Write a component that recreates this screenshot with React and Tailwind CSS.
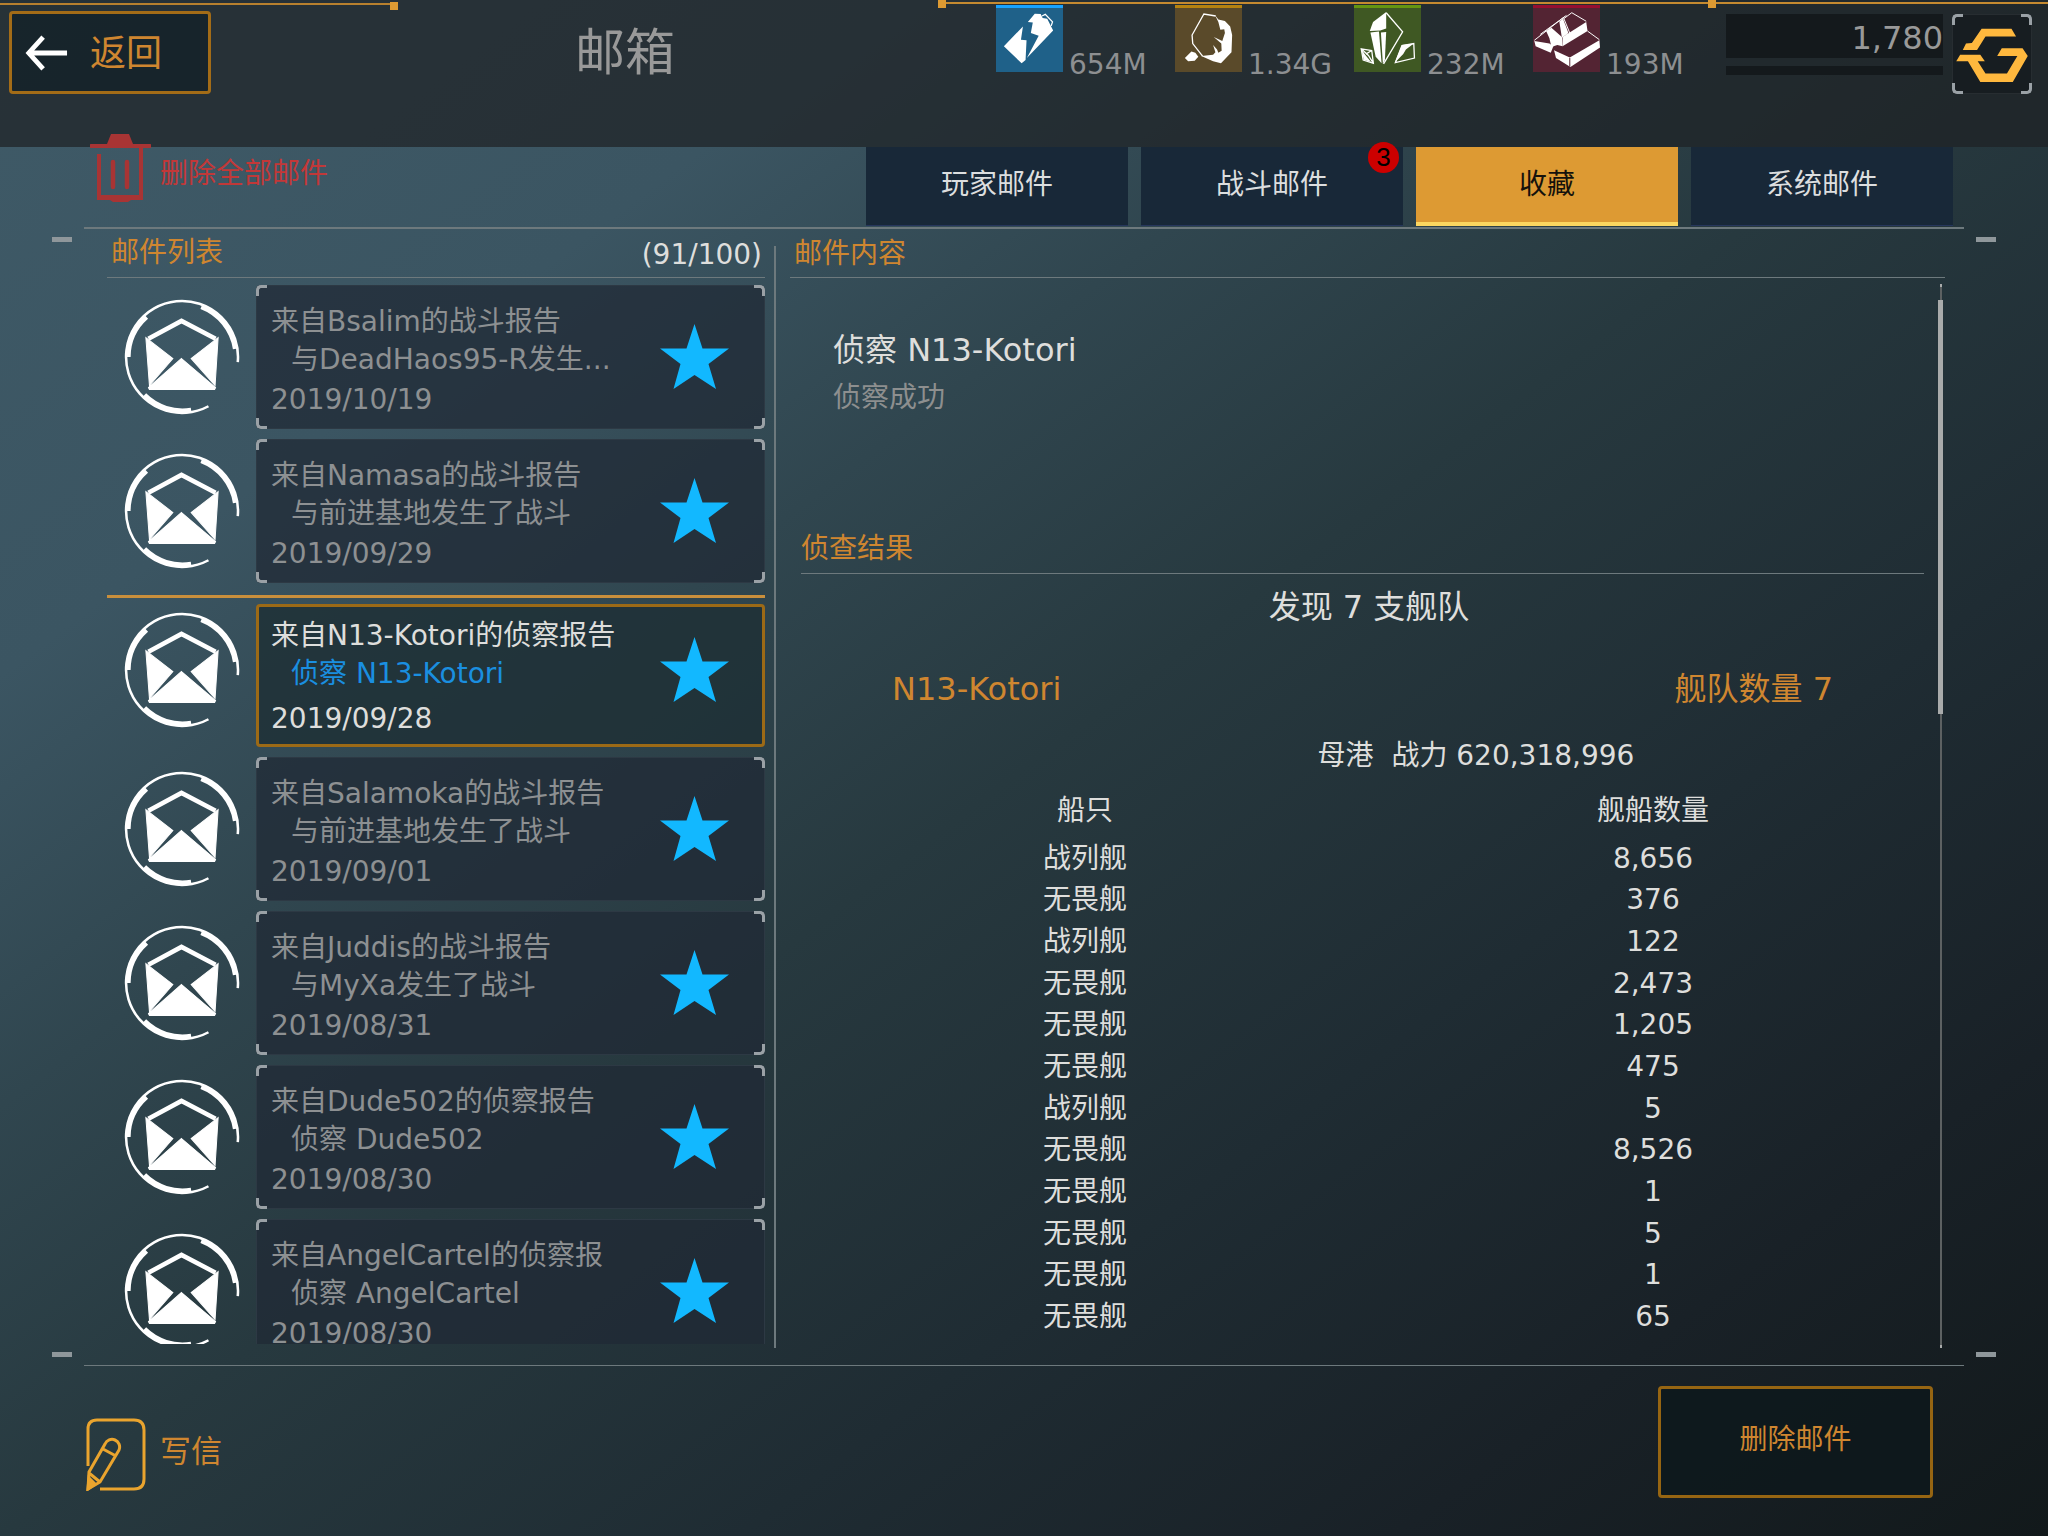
import { useState } from 'react';

const RESOURCES = [
  { id: 'energy',  amount: '654M',  box: 'border-[#17a2ff] bg-[#1f6189]' },
  { id: 'ore',     amount: '1.34G', box: 'border-[#b6820f] bg-[#5a4a2a]' },
  { id: 'crystal', amount: '232M',  box: 'border-[#659510] bg-[#3f5823]' },
  { id: 'ingot',   amount: '193M',  box: 'border-[#960f30] bg-[#532433]' },
];

const TABS = [
  { id: 'player', label: '玩家邮件' },
  { id: 'battle', label: '战斗邮件', badge: 3 },
  { id: 'saved',  label: '收藏' },
  { id: 'system', label: '系统邮件' },
];

const MAILS = [
  { id: 1, title: '来自Bsalim的战斗报告',     body: '与DeadHaos95-R发生...', date: '2019/10/19' },
  { id: 2, title: '来自Namasa的战斗报告',     body: '与前进基地发生了战斗',  date: '2019/09/29' },
  { id: 3, title: '来自N13-Kotori的侦察报告', body: '侦察 N13-Kotori',       date: '2019/09/28' },
  { id: 4, title: '来自Salamoka的战斗报告',   body: '与前进基地发生了战斗',  date: '2019/09/01' },
  { id: 5, title: '来自Juddis的战斗报告',     body: '与MyXa发生了战斗',      date: '2019/08/31' },
  { id: 6, title: '来自Dude502的侦察报告',    body: '侦察 Dude502',          date: '2019/08/30' },
  { id: 7, title: '来自AngelCartel的侦察报',  body: '侦察 AngelCartel',      date: '2019/08/30' },
];

const SHIPS = [
  ['战列舰', '8,656'],
  ['无畏舰', '376'],
  ['战列舰', '122'],
  ['无畏舰', '2,473'],
  ['无畏舰', '1,205'],
  ['无畏舰', '475'],
  ['战列舰', '5'],
  ['无畏舰', '8,526'],
  ['无畏舰', '1'],
  ['无畏舰', '5'],
  ['无畏舰', '1'],
  ['无畏舰', '65'],
];

function ResourceIcon({ id }) {
  return (
    <svg viewBox="0 0 204 201" className="absolute inset-x-0 -top-[3px] w-full h-[67px]" fill="#fff" stroke="#fff" strokeWidth="0">
      {id === 'energy' && (
        <>
          <path d="M24 124 82 64 76 104 93 106 90 166 78 176Z" />
          <path d="M94 160 130 92 106 84 112 52 97 50 118 25 136 26 142 38 156 40 174 76Z" />
          <path d="M140 32 150 27 172 50 168 62" fill="none" strokeWidth="4" />
        </>
      )}
      {id === 'ore' && (
        <>
          <path d="M124 32 88 26 52 90 54 116 84 154" fill="none" strokeWidth="4" />
          <path d="M122 30 132 43 152 47 168 64 174 90 172 142 140 176 116 170 80 154 116 150 123 142 116 120 128 134 132 144 142 138 141 116 118 96 144 108 152 84 150 72 138 74 132 50Z" />
          <path d="M30 160 50 140 62 144 71 156 60 168 40 170Z" />
        </>
      )}
      {id === 'crystal' && (
        <>
          <path d="M98 22 148 80 90 178" fill="none" strokeWidth="4" />
          <path d="M98 20V70L80 76 48 78 58 50Z" />
          <path d="M50 82 76 79 84 176 66 156Z" />
          <path d="M82 82 98 81 94 166 88 178Z" />
          <path d="M22 132 54 137 59 176 28 166ZM22 132 44 152 59 176M36 148 54 137" fill="none" strokeWidth="4" />
          <path d="M22 132 34 150 52 172 30 165Z" />
          <path d="M182 116 184 160 126 174 146 122Z" fill="none" strokeWidth="4" />
          <path d="M182 116 146 120 124 174 150 148 158 134Z" />
        </>
      )}
      {id === 'ingot' && (
        <>
          <path d="M4 106 96 34M22 88 102 30M118 22 162 48M118 22 86 46M166 78 202 104M86 46 104 90M94 40 112 84" fill="none" strokeWidth="3" />
          <path d="M4 108 50 116 62 124 54 144 8 124Z" />
          <path d="M40 78 56 68 88 96 90 124 74 120 56 126 50 100Z" />
          <path d="M80 48 92 42 108 84 88 98Z" />
          <path d="M90 96 162 50 166 78 90 124Z" />
          <path d="M64 136 112 158 202 106 204 128 114 187 70 160Z" />
          <path d="M112 160V186" stroke="#532433" strokeWidth="3" />
        </>
      )}
    </svg>
  );
}

function MailIcon() {
  return (
    <svg viewBox="1 1 114 114" className="w-[116px] h-[116px] shrink-0" fill="none" stroke="#fff">
      <path d="M112.8 63A55 55 0 1 0 84 106.4" strokeWidth="2.5" />
      <path d="M77 8.5A53 53 0 0 1 110.5 50" strokeWidth="5" />
      <path d="M23 18.5A53 53 0 0 0 5 58" strokeWidth="5" />
      <path d="M21 95.5A53 53 0 0 0 67 110.3" strokeWidth="5" />
      <path d="M25 40 57.5 22.5 91 40" strokeWidth="4.5" />
      <path d="M22.5 39 49 59.5 26 86ZM93.5 39 67 59.5 90.5 86ZM57.5 59.5 91 88 90 90H26L25 88Z" fill="#fff" />
    </svg>
  );
}

function Corners() {
  return (
    <>
      <span className="absolute -left-px -top-px w-[11px] h-[11px] rounded-tl-[5px] border-l-[3px] border-t-[3px] border-[#9aa1a6]" />
      <span className="absolute -right-px -top-px w-[11px] h-[11px] rounded-tr-[5px] border-r-[3px] border-t-[3px] border-[#9aa1a6]" />
      <span className="absolute -left-px -bottom-px w-[11px] h-[11px] rounded-bl-[5px] border-l-[3px] border-b-[3px] border-[#9aa1a6]" />
      <span className="absolute -right-px -bottom-px w-[11px] h-[11px] rounded-br-[5px] border-r-[3px] border-b-[3px] border-[#9aa1a6]" />
    </>
  );
}

function Header() {
  return (
    <header className="relative h-[147px] shrink-0 flex items-start bg-[#1e2124]/70">
      <div className="absolute left-0 top-[3px] w-[398px] h-[2px] bg-[#b8802e]">
        <span className="absolute right-0 -top-px w-2 h-2 bg-[#dd9a33]" />
      </div>
      <div className="absolute right-0 top-[2px] w-[1110px] h-[2px] bg-[#c58a30]">
        <span className="absolute left-0 -top-[2px] w-2 h-2 bg-[#dd9a33]" />
        <span className="absolute right-[332px] -top-[2px] w-2 h-2 bg-[#dd9a33]" />
      </div>

      <button className="ml-[9px] mt-[11px] w-[202px] h-[83px] flex items-center gap-[22px] pl-3 rounded-[4px] border-[3px] border-[#a36c17] bg-[#16242a]/90 text-[36px] text-[#cf8630]">
        <svg viewBox="0 0 46 36" className="w-11 h-9" fill="none" stroke="#fff" strokeWidth="5">
          <path d="M20 1.5 5 18 20 34.5M4 18H45" />
        </svg>
        <span className="pt-[2px]">返回</span>
      </button>
      <h1 className="ml-[364px] mt-[18px] text-[50px] leading-[70px] text-[#999]">邮箱</h1>

      <ul className="ml-auto mt-[5px] flex">
        {RESOURCES.map(r => (
          <li key={r.id} className="w-[179px] flex gap-[6px]">
            <div className={`relative w-[67px] h-[67px] shrink-0 border-t-[3px] ${r.box}`}>
              <ResourceIcon id={r.id} />
            </div>
            <span className="mt-[43px] text-[28px] leading-[34px] text-[#8d8f91]">{r.amount}</span>
          </li>
        ))}
      </ul>
      <div className="ml-[14px] mt-[14px] w-[217px] shrink-0">
        <div className="h-11 bg-[#14191c] text-right text-[32px] leading-[48px] text-[#999]">1,780</div>
        <div className="mt-2 h-[9px] bg-[#14191c]" />
      </div>
      <button aria-label="G" className="relative ml-[9px] mr-4 mt-[14px] w-20 h-20 shrink-0 rounded-[4px] border border-[#272d31] bg-[#171d21]">
        <Corners />
        <svg viewBox="0 0 240 240" className="w-full h-full" fill="#ffb83e">
          <path d="M88 42H180L194 66H100L74 108H30L40 88 58 86Z" />
          <path d="M150 102H214L230 126 184 206H84L46 142H10L22 122H84L98 142H76L100 180H166L198 126H136Z" />
        </svg>
      </button>
    </header>
  );
}

function Toolbar({ tab, onTab }) {
  return (
    <div className="relative h-20 shrink-0 flex items-start justify-between pl-[90px] pr-[95px]">
      <button className="relative -mt-[13px] flex items-center gap-[9px] text-[28px] text-[#c23838]">
        <svg viewBox="0 0 61 68" className="w-[61px] h-[68px]" fill="#a83434" stroke="#a83434">
          <path d="M21 0H39L43 10H17Z" stroke="none" />
          <path d="M1 12H60" strokeWidth="4" strokeLinecap="round" />
          <path d="M9 20V64H51V12" fill="none" strokeWidth="4" />
          <path d="M7 61H53V66H41L38 68H23L20 66H7Z" stroke="none" />
          <path d="M23 28V53M37 28V53" strokeWidth="4.5" strokeLinecap="round" />
        </svg>
        <span className="pt-3">删除全部邮件</span>
      </button>
      <nav className="flex gap-[13px]">
        {TABS.map(t => (
          <button
            key={t.id}
            onClick={() => onTab(t.id)}
            className={`relative w-[262px] h-[79px] text-[28px] ${
              t.id === tab
                ? 'bg-[#dd9a33] text-[#15120c] border-b-4 border-[#fbd660]'
                : 'pb-[3px] bg-[#182838] text-[#dcdedf] border-b border-[#26365c]'
            }`}
          >
            {t.label}
            {t.badge && (
              <span className="absolute right-1 -top-[5px] w-[31px] h-[31px] rounded-full bg-[#cc0000] text-black font-['Liberation_Sans'] text-[26px] leading-[31px]">
                {t.badge}
              </span>
            )}
          </button>
        ))}
      </nav>
    </div>
  );
}

function MailRow({ mail, selected, onSelect }) {
  return (
    <li className={`flex ${selected ? 'mt-[2px] pt-[6px] border-t-[3px] border-[#c98f3c]' : ''}`}>
      <div className={`pl-[17px] pr-4 ${selected ? 'pt-2' : 'pt-[14px]'}`}>
        <MailIcon />
      </div>
      <div
        className={`relative flex-1 min-w-0 flex items-center ${
          selected
            ? 'h-[143px] rounded-[4px] border-[3px] border-[#9c6a16] bg-[#1e3036]/85'
            : 'h-36 rounded-[4px] border border-[#2d3944] bg-[#202a35]/75'
        }`}
      >
        {!selected && <Corners />}
        <button
          onClick={onSelect}
          className={`flex-1 min-w-0 self-stretch flex flex-col justify-start text-left text-[28px] leading-[38px] whitespace-nowrap ${
            selected ? 'pl-3 pt-[10px] text-[#dededc]' : 'pl-[14px] pt-[17px] text-[#8d9092]'
          }`}
        >
          <span>{mail.title}</span>
          <span className={selected ? 'pl-5 text-[#1a8fe0]' : 'pl-5'}>{mail.body}</span>
          <span className={selected ? 'mt-[7px]' : 'mt-[2px]'}>{mail.date}</span>
        </button>
        <button aria-label="收藏" className={`shrink-0 ${selected ? 'mr-[33px] pb-3' : 'mr-[35px] pb-px'}`}>
          <svg viewBox="0 0 69 65" className="w-[69px] h-[65px]" fill="#12b8ff">
            <path d="M34.500 0 42.500 24.500 69 24.500 48.500 40 56 65 34.500 51 13.500 65 20.500 40 0 24.500 26.500 24.500Z" />
          </svg>
        </button>
      </div>
    </li>
  );
}

function MailContent() {
  return (
    <div className="flex-1 min-h-0 flex">
      <div className="flex-1 min-w-0 overflow-hidden pl-[11px] pt-[50px] text-[28px] text-[#dededc]">
        <h3 className="pl-8 text-[32px] leading-[44px]">侦察 N13-Kotori</h3>
        <p className="mt-1 pl-8 leading-[44px] text-[#8d8f8f]">侦察成功</p>

        <h3 className="mt-[109px] mr-[13px] pb-1 leading-10 text-[#cf8630] border-b border-[#6d797d]">侦查结果</h3>
        <p className="mt-[11px] text-center text-[32px] leading-[44px]">发现 7 支舰队</p>
        <div className="mt-[38px] flex justify-between pl-[91px] pr-[104px] text-[32px] leading-[44px] text-[#cf8630]">
          <span>N13-Kotori</span>
          <span>舰队数量 7</span>
        </div>
        <p className="mt-[25px] pl-[214px] text-center leading-10 whitespace-pre">母港  战力 620,318,996</p>

        <table className="mt-2 w-full h-[554px] table-fixed text-center leading-9">
          <thead>
            <tr className="h-[54px]">
              <th className="font-normal">船只</th>
              <th className="font-normal">舰船数量</th>
            </tr>
          </thead>
          <tbody>
            {SHIPS.map(([name, count], i) => (
              <tr key={i}>
                <td>{name}</td>
                <td>{count}</td>
              </tr>
            ))}
          </tbody>
        </table>
      </div>
      <div className="relative mt-[6px] -mb-1 mr-px w-[7px] shrink-0">
        <div className="mx-auto w-[2px] h-full bg-[#5d6162] border-y-[3px] border-[#a9abab]" />
        <div className="absolute left-px top-4 w-[5px] h-[414px] bg-[#a9abab]" />
      </div>
    </div>
  );
}

function Ticks() {
  return (
    <div className="flex justify-between px-[52px] h-[5px] shrink-0">
      <span className="w-5 bg-[#8f979b]" />
      <span className="w-5 bg-[#8f979b]" />
    </div>
  );
}

export default function App() {
  const [tab, setTab] = useState('saved');
  const [selected, setSelected] = useState(3);

  return (
    <div className="h-screen flex flex-col overflow-hidden bg-[linear-gradient(to_bottom_right,#3f5a67_0%,#3b5562_22%,#30464f_36%,#27393f_50%,#1f2c33_68%,#192127_84%,#12191b_100%)] font-['DejaVu_Sans','Noto_Sans_CJK_SC',sans-serif]">
      <Header />
      <Toolbar tab={tab} onTab={setTab} />

      <main className="relative flex-1 min-h-0 mx-[84px] flex border-t-2 border-b border-[#6d797d] pl-[23px] pr-[19px] pb-[21px]">
        <div className="absolute -inset-x-[84px] top-2">
          <Ticks />
        </div>
        <div className="absolute -inset-x-[84px] bottom-2">
          <Ticks />
        </div>

        <section className="flex-[658] min-w-0 flex flex-col">
          <div className="h-[49px] shrink-0 flex items-center justify-between pl-1 pr-[3px] border-b border-[#6d797d] text-[28px] leading-9">
            <h2 className="text-[#cf8630]">邮件列表</h2>
            <span className="pt-1 text-[#dededc]">(91/100)</span>
          </div>
          <ul className="mt-[7px] flex-1 min-h-0 overflow-hidden flex flex-col gap-[10px]">
            {MAILS.map(m => (
              <MailRow key={m.id} mail={m} selected={m.id === selected} onSelect={() => setSelected(m.id)} />
            ))}
          </ul>
        </section>

        <div className="mt-[17px] -mb-1 ml-[9px] mr-[14px] w-[2px] shrink-0 bg-[#6d797d]" />

        <section className="flex-[1155] min-w-0 flex flex-col">
          <div className="h-[49px] shrink-0 flex items-center pl-1 border-b border-[#6d797d] text-[28px] leading-9">
            <h2 className="pt-[2px] text-[#cf8630]">邮件内容</h2>
          </div>
          <MailContent />
        </section>
      </main>

      <footer className="h-[170px] shrink-0 flex items-start justify-between pl-[86px] pr-[115px] pt-5">
        <button className="mt-8 flex items-center gap-[14px] text-[31px] text-[#cf8630]">
          <svg viewBox="0 0 60 73" className="w-[60px] h-[73px]" fill="none" stroke="#eaa42e" strokeWidth="3">
            <path d="M2 48V11Q2 2 11 2H48Q58 2 58 12V61Q58 71 48 71H14" />
            <path d="M2 71 3 54 19 26A7.500 7.500 0 0 1 33 32L14 64ZM17 31 30 38M3 55 14 64" />
            <path d="M2 71 3 60 9 66Z" fill="#eaa42e" />
          </svg>
          <span className="pb-[6px]">写信</span>
        </button>
        <button className="w-[275px] h-[112px] pb-1 rounded-[4px] border-[3px] border-[#966512] bg-[#0c181c]/80 text-[28px] text-[#cf8630]">
          删除邮件
        </button>
      </footer>
    </div>
  );
}
